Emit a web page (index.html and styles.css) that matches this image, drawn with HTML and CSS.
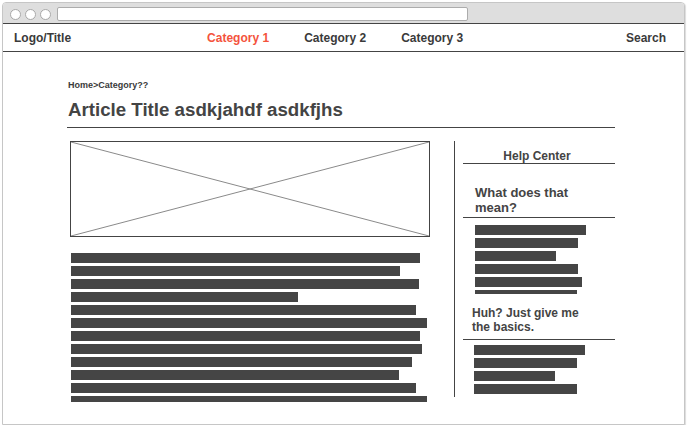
FILE: index.html
```html
<!DOCTYPE html>
<html>
<head>
<meta charset="utf-8">
<link rel="stylesheet" href="styles.css">
</head>
<body>
<div class="window">
  <div class="chrome">
    <span class="dot"></span><span class="dot"></span><span class="dot"></span>
    <span class="url"></span>
  </div>
  <nav class="nav">
    <span class="logo">Logo/Title</span>
    <div class="nav-links">
      <a class="nav-link active">Category 1</a>
      <a class="nav-link">Category 2</a>
      <a class="nav-link">Category 3</a>
    </div>
    <span class="search">Search</span>
  </nav>
  <main class="main">
    <div class="crumbs">Home&gt;Category??</div>
    <h1 class="title">Article Title asdkjahdf asdkfjhs</h1>
    <div class="cols">
      <div class="article">
        <div class="placeholder">
          <svg class="x" viewBox="0 0 358 94" preserveAspectRatio="none">
            <line x1="0" y1="0" x2="358" y2="94"/>
            <line x1="0" y1="94" x2="358" y2="0"/>
          </svg>
        </div>
        <div class="bars body-bars">
          <span class="bar" style="width:349px"></span>
          <span class="bar" style="width:329px"></span>
          <span class="bar" style="width:348px"></span>
          <span class="bar" style="width:227px"></span>
          <span class="bar" style="width:345px"></span>
          <span class="bar" style="width:356px"></span>
          <span class="bar" style="width:349px"></span>
          <span class="bar" style="width:351px"></span>
          <span class="bar" style="width:341px"></span>
          <span class="bar" style="width:328px"></span>
          <span class="bar" style="width:345px"></span>
          <span class="bar" style="width:356px"></span>
        </div>
      </div>
      <aside class="side">
        <div class="side-head">Help Center</div>
        <h2 class="q q1">What does that mean?</h2>
        <div class="bars side-bars1">
          <span class="bar" style="width:111px"></span>
          <span class="bar" style="width:103px"></span>
          <span class="bar" style="width:81px"></span>
          <span class="bar" style="width:103px"></span>
          <span class="bar" style="width:107px"></span>
          <span class="bar" style="width:102px"></span>
        </div>
        <h2 class="q q2">Huh? Just give me the basics.</h2>
        <div class="bars side-bars2">
          <span class="bar" style="width:111px"></span>
          <span class="bar" style="width:103px"></span>
          <span class="bar" style="width:81px"></span>
          <span class="bar" style="width:103px"></span>
        </div>
      </aside>
    </div>
  </main>
</div>
</body>
</html>
```
FILE: styles.css
```css
html, body {
  margin: 0;
  padding: 0;
  background: #ffffff;
}
body {
  font-family: "Liberation Sans", Arial, Helvetica, sans-serif;
  color: #444444;
}
.window {
  margin: 2px 0 0 2px;
  width: 683px;
  height: 423px;
  box-sizing: border-box;
  border: 1px solid #c6c6c6;
  border-radius: 4px 4px 0 0;
  box-shadow: 1px 1px 1px #dcdcdc;
  background: #ffffff;
  overflow: hidden;
  display: flex;
  flex-direction: column;
}
.chrome {
  height: 20px;
  flex: none;
  background: #dedede;
  display: flex;
  align-items: flex-start;
  padding-left: 7px;
}
.dot {
  width: 11px;
  height: 11px;
  box-sizing: border-box;
  border: 1px solid #a9a9a9;
  border-radius: 50%;
  background: #ffffff;
  margin-top: 6px;
  margin-right: 4px;
}
.url {
  width: 411px;
  height: 14px;
  box-sizing: border-box;
  border: 1px solid #acacac;
  border-radius: 2px;
  background: #ffffff;
  margin-top: 4px;
  margin-left: 2px;
}
.nav {
  flex: none;
  height: 29px;
  box-sizing: border-box;
  margin: 0 -1px;
  border: 1px solid #444444;
  display: flex;
  align-items: center;
  padding: 0 18px 0 11px;
  font-size: 12px;
  font-weight: bold;
  color: #3a3a3a;
}
.nav-links {
  display: flex;
  gap: 35px;
  margin-left: 136px;
}
.nav-link.active {
  color: #f4533d;
}
.search {
  margin-left: auto;
}
.main {
  padding: 28px 0 0 64px;
}
.crumbs {
  font-size: 9px;
  line-height: 11px;
  font-weight: bold;
  color: #3a3a3a;
  padding-left: 1px;
}
.title {
  margin: 8px 0 0 0;
  width: 547px;
  padding: 0 0 6px 1px;
  font-size: 18.7px;
  line-height: 22px;
  font-weight: bold;
  border-bottom: 1px solid #444444;
  color: #444444;
}
.cols {
  margin-top: 13px;
  display: grid;
  grid-template-columns: 387px 161px;
}
.placeholder {
  margin-left: 3px;
  width: 360px;
  height: 96px;
  box-sizing: border-box;
  border: 1px solid #444444;
}
.x {
  display: block;
  width: 100%;
  height: 100%;
}
.x line {
  stroke: #8a8a8a;
  stroke-width: 1;
}
.bars {
  display: flex;
  flex-direction: column;
  gap: 3px;
  overflow: hidden;
}
.bar {
  display: block;
  flex: none;
  height: 10px;
  background: #454545;
}
.body-bars {
  margin: 16px 0 0 4px;
  height: 149px;
}
.side {
  border-left: 1px solid #444444;
  height: 256px;
  padding-left: 8px;
}
.side-head {
  padding: 10px 4px 1px 0;
  line-height: 11px;
  font-size: 12px;
  font-weight: bold;
  text-align: center;
  border-bottom: 1px solid #444444;
}
.q {
  margin: 0;
  font-weight: bold;
  border-bottom: 1px solid #444444;
  color: #444444;
}
.q1 {
  margin-top: 21px;
  font-size: 13px;
  line-height: 15px;
  padding: 0 10px 2px 12px;
}
.side-bars1 {
  margin-top: 7px;
  padding-left: 12px;
  height: 69px;
}
.q2 {
  margin-top: 12px;
  font-size: 12px;
  line-height: 14px;
  padding: 0 25px 5px 9px;
}
.side-bars2 {
  margin-top: 5px;
  padding-left: 11px;
}
```
